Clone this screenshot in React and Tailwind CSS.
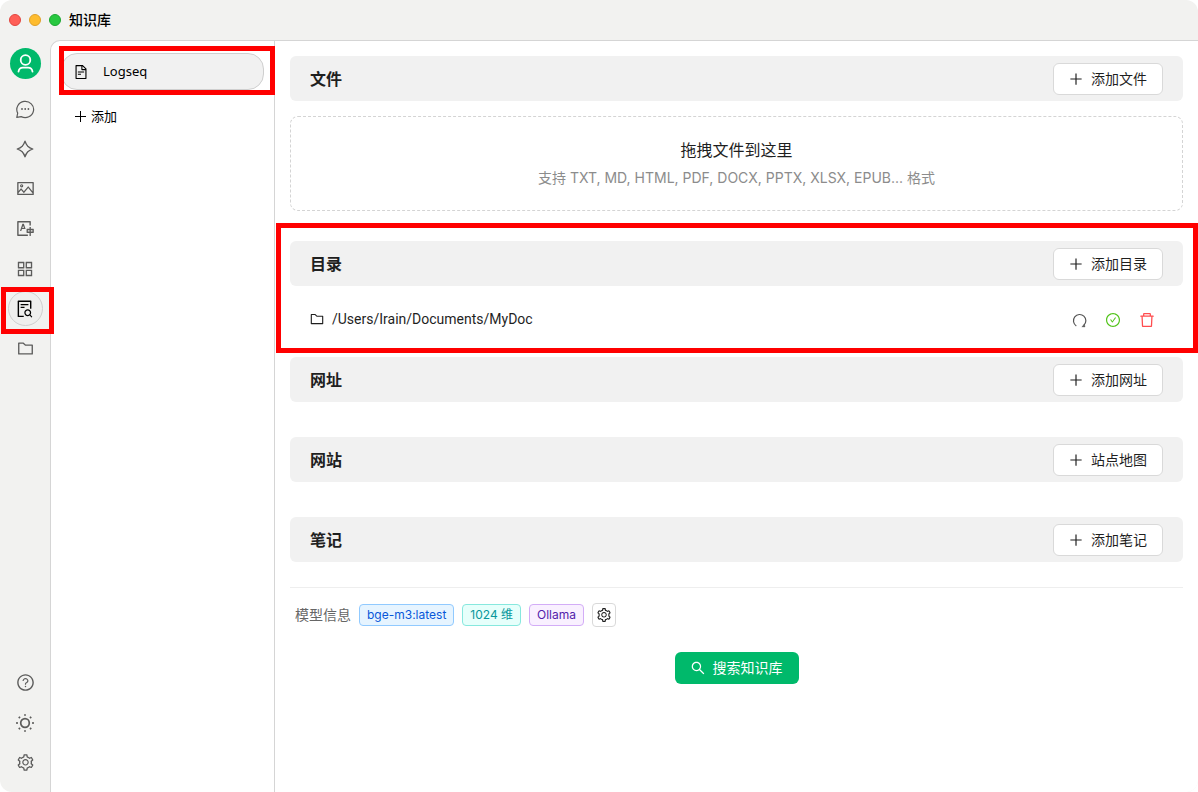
import React from 'react';
import {
  AiOutlineAppstore,
  AiOutlineCheckCircle,
  AiOutlineDelete,
  AiOutlineFileSearch,
  AiOutlineFileText,
  AiOutlineFolder,
  AiOutlinePicture,
  AiOutlinePlus,
  AiOutlineQuestionCircle,
  AiOutlineSearch,
  AiOutlineSetting,
  AiOutlineTranslation,
} from 'react-icons/ai';

function ChatIcon() {
  return (
    <svg viewBox="0 0 20 20" className="size-5" fill="none" stroke="currentColor" strokeWidth="1.2">
      <path d="M1.8 18.3l.9-4.2a8.4 8.1 0 1 1 3.5 3.5z" strokeLinejoin="round" />
      <g fill="currentColor" stroke="none">
        <circle cx="7" cy="10" r="0.9" />
        <circle cx="10.2" cy="10" r="0.9" />
        <circle cx="13.4" cy="10" r="0.9" />
      </g>
    </svg>
  );
}

function SparkIcon() {
  return (
    <svg viewBox="0 0 18 18" className="size-[18px]" fill="none" stroke="currentColor" strokeWidth="1.3" strokeLinejoin="round">
      <path d="M9 1.2C9.7 3.2 10.7 5 11.8 6.2C13 7.300 14.800 8.300 16.8 9C14.800 9.700 13 10.700 11.8 11.8C10.700 13 9.700 14.800 9 16.8C8.300 14.800 7.300 13 6.2 11.8C5 10.700 3.200 9.700 1.2 9C3.200 8.300 5 7.300 6.2 6.2C7.300 5 8.300 3.200 9 1.2Z" />
    </svg>
  );
}

function SunIcon() {
  return (
    <svg viewBox="0 0 20 20" className="size-5" fill="none" stroke="currentColor" strokeWidth="1.7">
      <circle cx="10" cy="10" r="4.3" />
      <path
        strokeWidth="1.8"
        d="M10 1.2v1.6M10 17.2v1.6M1.2 10h1.6M17.2 10h1.6M3.8 3.8l1.2 1.2M15 15l1.2 1.2M3.8 16.2L5 15M15 5l1.2-1.2"
      />
    </svg>
  );
}

function RefreshIcon() {
  return (
    <svg viewBox="0 0 16 16" className="size-4" fill="none" stroke="currentColor" strokeWidth="1.2">
      <path d="M4.3 13.9A6.2 6.2 0 1 1 11.800 13.300" />
      <path d="M9.800 14.800l3.200.1-.6-2.600z" fill="currentColor" strokeWidth="0.4" />
    </svg>
  );
}

function ThinPlusIcon() {
  return (
    <svg viewBox="0 0 13 13" className="size-[13px]" fill="none" stroke="currentColor" strokeWidth="1">
      <path d="M6.500 1v11M1 6.500h11" />
    </svg>
  );
}

function UserIcon() {
  return (
    <svg viewBox="0 0 31 31" className="size-full" fill="none" stroke="white" strokeWidth="1.8" strokeLinecap="round">
      <circle cx="15.5" cy="12" r="4.8" />
      <path d="M8.5 23.6c.4-2.8 2-4 4.4-4h5.2c2.400 0 4 1.200 4.400 4" />
    </svg>
  );
}

function Highlight({ className }) {
  return <div aria-hidden="true" className={`pointer-events-none absolute z-10 border-5 border-[#ff0000] ${className}`} />;
}

function NavButton({ label, children, active }) {
  return (
    <div className="relative">
      <button
        type="button"
        aria-label={label}
        className={`flex size-[35px] items-center justify-center rounded-full border ${
          active ? 'border-[#cfcfcf] bg-[#efefee] text-black' : 'border-transparent text-[#5c5c5b]'
        }`}
      >
        {children}
      </button>
      {active && <Highlight className="-top-1 -right-[11px] -bottom-2 -left-[7px]" />}
    </div>
  );
}

function SectionHeader({ title, action }) {
  return (
    <div className="flex h-[45px] items-center justify-between rounded-md bg-[#f1f1f1] px-5">
      <h2 className="text-base font-semibold text-[#1f1f1f]">{title}</h2>
      <button
        type="button"
        className="flex h-8 items-center gap-[7px] rounded-md border border-[#d9d9d9] bg-white pr-[15px] pl-3.5 text-sm text-[#1f1f1f]"
      >
        <AiOutlinePlus size={16} />
        {action}
      </button>
    </div>
  );
}

function Tag({ className, children }) {
  return <span className={`flex h-[22px] items-center rounded border px-[7px] text-xs ${className}`}>{children}</span>;
}

export default function App() {
  return (
    <div className="flex min-h-screen flex-col overflow-hidden rounded-xl bg-[#f2f2f0] font-['Inter','Noto_Sans_CJK_SC',sans-serif]">
      <header className="flex h-10 items-center gap-2 pl-[9px]">
        <span className="size-3 rounded-full border border-[#e2463f] bg-[#ff5f57]" />
        <span className="size-3 rounded-full border border-[#e0a028] bg-[#febc2e]" />
        <span className="size-3 rounded-full border border-[#1ba730] bg-[#28c840]" />
        <h1 className="text-sm font-medium text-black">知识库</h1>
      </header>

      <div className="flex flex-1">
        <nav aria-label="主导航" className="flex w-[50px] shrink-0 flex-col items-center pt-2 pb-3">
          <button type="button" aria-label="用户" className="size-[31px] rounded-full bg-[#00b96b]">
            <UserIcon />
          </button>
          <div className="mt-3 flex flex-col gap-[5px]">
            <NavButton label="聊天"><ChatIcon /></NavButton>
            <NavButton label="智能体"><SparkIcon /></NavButton>
            <NavButton label="绘画"><AiOutlinePicture size={19} /></NavButton>
            <NavButton label="翻译"><AiOutlineTranslation size={19} /></NavButton>
            <NavButton label="小程序"><AiOutlineAppstore size={20} /></NavButton>
            <NavButton label="知识库" active><AiOutlineFileSearch size={20} /></NavButton>
            <NavButton label="文件"><AiOutlineFolder size={19} /></NavButton>
          </div>
          <div className="mt-auto flex flex-col gap-[5px]">
            <NavButton label="帮助"><AiOutlineQuestionCircle size={19} /></NavButton>
            <NavButton label="主题"><SunIcon /></NavButton>
            <NavButton label="设置"><AiOutlineSetting size={19} /></NavButton>
          </div>
        </nav>

        <div className="flex min-w-0 flex-1 rounded-tl-[10px] border-t border-l border-[#d5d5d5] bg-white">
          <aside className="w-56 shrink-0 border-r border-[#d5d5d5] px-2.5 pt-3 text-[13px] text-black">
            <div className="relative">
              <button
                type="button"
                className="flex h-[37px] w-full items-center gap-3.5 rounded-2xl border border-[#cfcfcf] bg-[#f1f1f1] px-[11px] font-['Noto_Sans','Noto_Sans_CJK_SC',sans-serif]"
              >
                <AiOutlineFileText size={16} />
                Logseq
              </button>
              <Highlight className="-top-[7px] -right-[11px] -bottom-[5px] -left-0.5" />
            </div>
            <button type="button" className="mt-2.5 flex h-[33px] items-center gap-1 px-[13px]">
              <ThinPlusIcon />
              添加
            </button>
          </aside>

          <main className="min-w-0 flex-1 p-[15px]">
            <section>
              <SectionHeader title="文件" action="添加文件" />
              <div className="mt-[15px] flex h-[95px] flex-col items-center justify-center gap-1 rounded-lg border border-dashed border-[#d4d4d4]">
                <p className="text-base leading-6 text-[#1f1f1f]">拖拽文件到这里</p>
                <p className="text-sm leading-6 text-[#8c8c8c]">支持 TXT, MD, HTML, PDF, DOCX, PPTX, XLSX, EPUB... 格式</p>
              </div>
            </section>

            <section className="relative mt-[30px]">
              <SectionHeader title="目录" action="添加目录" />
              <div className="flex h-[71px] items-center justify-between px-5 pb-1">
                <div className="flex items-center gap-[7px] pb-0.5 font-['Roboto','Noto_Sans_CJK_SC',sans-serif] text-sm text-[#1f1f1f]">
                  <AiOutlineFolder size={16} className="-ml-px" />
                  <span>/Users/Irain/Documents/MyDoc</span>
                </div>
                <div className="flex items-center gap-[17px] pr-[7px]">
                  <button type="button" aria-label="刷新" className="text-[#555]"><RefreshIcon /></button>
                  <AiOutlineCheckCircle size={16} className="text-[#52c41a]" aria-label="已完成" />
                  <button type="button" aria-label="删除" className="text-[#ff4d4f]"><AiOutlineDelete size={18} /></button>
                </div>
              </div>
              <Highlight className="-top-[18px] -right-[15px] bottom-1 -left-3.5" />
            </section>

            <section><SectionHeader title="网址" action="添加网址" /></section>
            <section className="mt-[35px]"><SectionHeader title="网站" action="站点地图" /></section>
            <section className="mt-[35px]"><SectionHeader title="笔记" action="添加笔记" /></section>

            <hr className="mt-[25px] border-[#eeeeee]" />
            <div className="mt-[15px] flex items-center gap-2 px-[5px]">
              <span className="text-sm text-[#666]">模型信息</span>
              <Tag className="border-[#91caff] bg-[#e6f4ff] text-[#0958d9]">bge-m3:latest</Tag>
              <Tag className="border-[#87e8de] bg-[#e6fffb] text-[#08979c]">1024 维</Tag>
              <Tag className="border-[#d3adf7] bg-[#f9f0ff] text-[#531dab]">Ollama</Tag>
              <button
                type="button"
                aria-label="知识库设置"
                className="flex size-6 items-center justify-center rounded border border-[#d9d9d9] text-[#1f1f1f]"
              >
                <AiOutlineSetting size={16} />
              </button>
            </div>
            <div className="mt-[25px] flex justify-center">
              <button type="button" className="flex h-8 items-center gap-[7px] rounded-md bg-[#00b96b] pr-4 pl-[15px] text-sm text-white">
                <AiOutlineSearch size={16} />
                搜索知识库
              </button>
            </div>
          </main>
        </div>
      </div>
    </div>
  );
}
